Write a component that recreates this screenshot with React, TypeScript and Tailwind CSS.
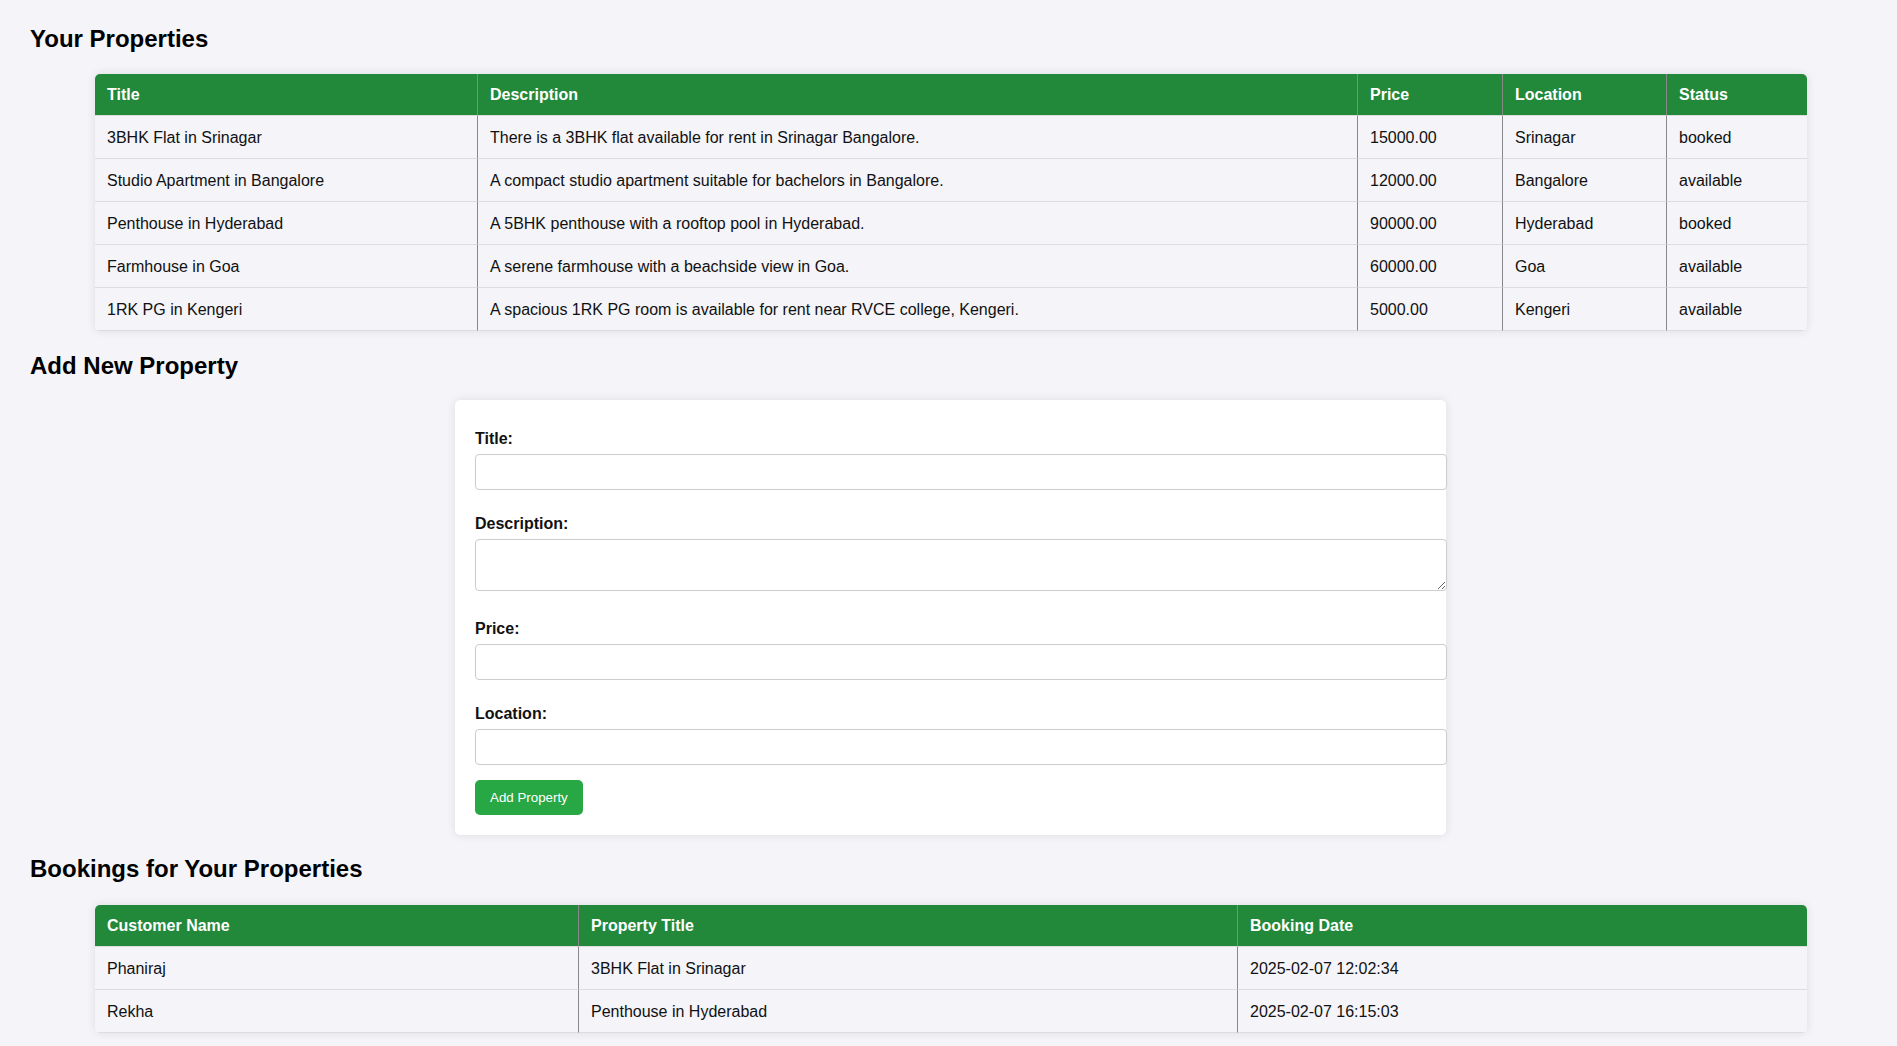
import React from 'react';

interface Property {
  title: string;
  description: string;
  price: string;
  location: string;
  status: string;
}

interface Booking {
  customer: string;
  property: string;
  date: string;
}

const properties: Property[] = [
  { title: '3BHK Flat in Srinagar', description: 'There is a 3BHK flat available for rent in Srinagar Bangalore.', price: '15000.00', location: 'Srinagar', status: 'booked' },
  { title: 'Studio Apartment in Bangalore', description: 'A compact studio apartment suitable for bachelors in Bangalore.', price: '12000.00', location: 'Bangalore', status: 'available' },
  { title: 'Penthouse in Hyderabad', description: 'A 5BHK penthouse with a rooftop pool in Hyderabad.', price: '90000.00', location: 'Hyderabad', status: 'booked' },
  { title: 'Farmhouse in Goa', description: 'A serene farmhouse with a beachside view in Goa.', price: '60000.00', location: 'Goa', status: 'available' },
  { title: '1RK PG in Kengeri', description: 'A spacious 1RK PG room is available for rent near RVCE college, Kengeri.', price: '5000.00', location: 'Kengeri', status: 'available' },
];

const bookings: Booking[] = [
  { customer: 'Phaniraj', property: '3BHK Flat in Srinagar', date: '2025-02-07 12:02:34' },
  { customer: 'Rekha', property: 'Penthouse in Hyderabad', date: '2025-02-07 16:15:03' },
];

const headCell = 'h-[42px] flex items-center px-[12px] border-b border-[#ddd] font-bold text-white';
const bodyCell = 'h-[43px] flex items-center px-[12px] pt-[1px] border-b border-[#ddd]';
const divider = 'border-r border-r-[#888]';

const Field = ({ label, gap, textarea }: { label: string; gap: string; textarea?: boolean }) => (
  <div className={gap}>
    <label className="block h-[18px] leading-[18px] font-bold text-[16px] mb-[6px]">{label}</label>
    {textarea ? (
      <textarea className="block w-[972px] h-[52px] border border-[#ccc] rounded-[4px] bg-white px-[10px] py-[8px] text-[16px] resize-y" />
    ) : (
      <input type="text" className="block w-[972px] h-[36px] border border-[#ccc] rounded-[4px] bg-white px-[10px] text-[16px]" />
    )}
  </div>
);

export default function App() {
  return (
    <div className="min-h-screen bg-[#f4f4f9] text-[#111] text-[16px] font-['Liberation_Sans',Arial,sans-serif] pt-[25px] pb-[16px]">
      <h2 className="ml-[30px] text-[24px] leading-[28px] font-bold text-black">Your Properties</h2>
      <div className="mt-[21px] ml-[95px] w-[1712px] rounded-[5px] overflow-hidden bg-[#f4f4f9] shadow-[0_0_10px_rgba(0,0,0,0.1)]">
        <div className="grid grid-cols-[383px_880px_145px_164px_140px] bg-[#22883a]">
          <div className={`${headCell} ${divider}`}>Title</div>
          <div className={`${headCell} ${divider}`}>Description</div>
          <div className={`${headCell} ${divider}`}>Price</div>
          <div className={`${headCell} ${divider}`}>Location</div>
          <div className={headCell}>Status</div>
        </div>
        {properties.map((p, idx) => (
          <div key={idx} className="grid grid-cols-[383px_880px_145px_164px_140px]">
            <div className={`${bodyCell} ${divider}`}>{p.title}</div>
            <div className={`${bodyCell} ${divider}`}>{p.description}</div>
            <div className={`${bodyCell} ${divider}`}>{p.price}</div>
            <div className={`${bodyCell} ${divider}`}>{p.location}</div>
            <div className={bodyCell}>{p.status}</div>
          </div>
        ))}
      </div>

      <h2 className="mt-[21px] ml-[30px] text-[24px] leading-[28px] font-bold text-black">Add New Property</h2>
      <div className="mt-[20px] ml-[455px] w-[991px] bg-white rounded-[5px] px-[20px] pt-[30px] pb-[20px] shadow-[0_0_10px_rgba(0,0,0,0.1)]">
        <Field label="Title:" gap="" />
        <Field label="Description:" gap="mt-[25px]" textarea />
        <Field label="Price:" gap="mt-[29px]" />
        <Field label="Location:" gap="mt-[25px]" />
        <button className="mt-[15px] h-[35px] px-[15px] bg-[#28a745] text-white text-[13.33px] rounded-[5px]">
          Add Property
        </button>
      </div>

      <h2 className="mt-[20px] ml-[30px] text-[24px] leading-[28px] font-bold text-black">Bookings for Your Properties</h2>
      <div className="mt-[22px] ml-[95px] w-[1712px] rounded-[5px] overflow-hidden bg-[#f4f4f9] shadow-[0_0_10px_rgba(0,0,0,0.1)]">
        <div className="grid grid-cols-[484px_659px_569px] bg-[#22883a]">
          <div className={`${headCell} ${divider}`}>Customer Name</div>
          <div className={`${headCell} ${divider}`}>Property Title</div>
          <div className={headCell}>Booking Date</div>
        </div>
        {bookings.map((b, idx) => (
          <div key={idx} className="grid grid-cols-[484px_659px_569px]">
            <div className={`${bodyCell} ${divider}`}>{b.customer}</div>
            <div className={`${bodyCell} ${divider}`}>{b.property}</div>
            <div className={bodyCell}>{b.date}</div>
          </div>
        ))}
      </div>
    </div>
  );
}
